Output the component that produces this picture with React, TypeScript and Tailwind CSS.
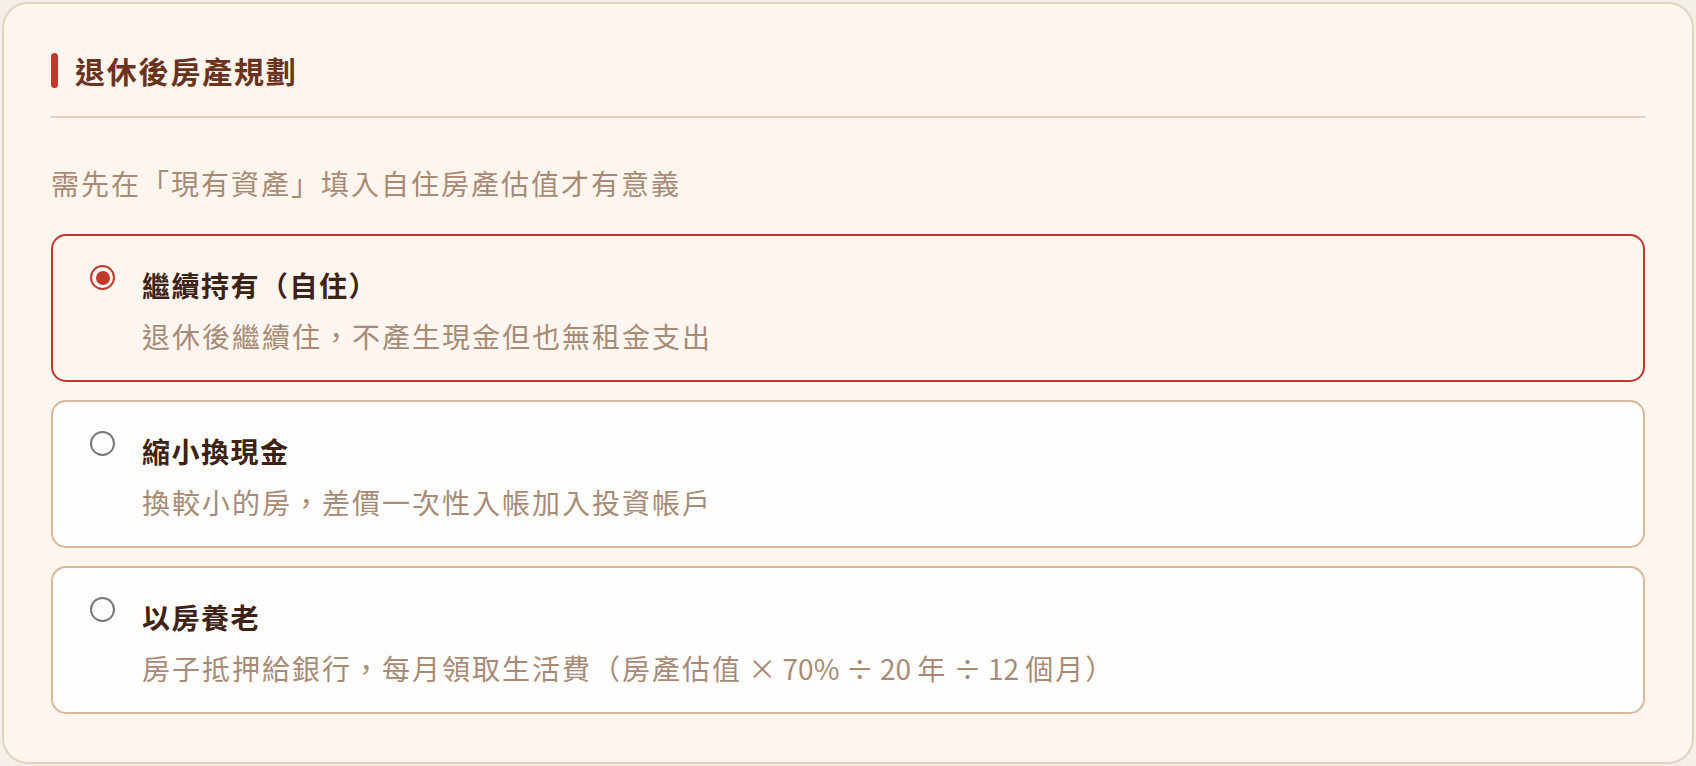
import React, { useState } from "react";

const FONT = '"Noto Sans CJK TC", "Noto Sans", "Liberation Sans", sans-serif';

type Seg = { t: string; latin?: boolean };

const options: { title: string; desc: Seg[] }[] = [
  { title: "繼續持有（自住）", desc: [{ t: "退休後繼續住，不產生現金但也無租金支出" }] },
  { title: "縮小換現金", desc: [{ t: "換較小的房，差價一次性入帳加入投資帳戶" }] },
  {
    title: "以房養老",
    desc: [
      { t: "房子抵押給銀行，每月領取生活費（房產估值" },
      { t: " × 70% ÷ 20 ", latin: true },
      { t: "年" },
      { t: " ÷ 12 ", latin: true },
      { t: "個月）" },
    ],
  },
];

export default function App() {
  const [selected, setSelected] = useState(0);
  return (
    <div className="min-h-[766px] w-full bg-[#f3efe7] p-[2px]" style={{ fontFamily: FONT }}>
      <div className="flex h-[762px] flex-col rounded-[26px] border-2 border-[#e2d2c0] bg-[#fdf5ee] px-[47px] pt-[47px]">
        <div className="flex h-[38px] items-center">
          <div className="h-[35px] w-[7px] rounded-full bg-[#c0392b]" />
          <h2 className="ml-[17px] text-[30px] font-bold leading-[38px] tracking-[1.8px] text-[#6b331d]">
            退休後房產規劃
          </h2>
        </div>
        <div className="mt-[27px] h-[2px] w-full bg-[#e3d0bd]" />
        <p className="mt-[45px] text-[28px] leading-[40px] tracking-[2px] text-[#a88b76]">
          需先在「現有資產」填入自住房產估值才有意義
        </p>
        <div className="mt-[31px] flex flex-col gap-[18px]">
          {options.map((o, i) => {
            const active = i === selected;
            return (
              <button
                key={i}
                onClick={() => setSelected(i)}
                className={
                  "flex items-start rounded-[15px] border-2 pb-[24px] pl-[37px] pt-[29px] text-left " +
                  (active ? "border-[#c0392b] bg-[#fdf5ef]" : "border-[#d8b99c] bg-[#fffefd]")
                }
              >
                <span
                  className={
                    "flex h-[25px] w-[25px] shrink-0 items-center justify-center rounded-full border-2 " +
                    (active ? "border-[#c0392b]" : "border-[#777777]")
                  }
                >
                  {active && <span className="h-[14px] w-[14px] rounded-full bg-[#c0392b]" />}
                </span>
                <span className="ml-[27px] flex flex-col gap-[11px]">
                  <span className="text-[28px] font-bold leading-[40px] tracking-[1.5px] text-[#3e2215]">
                    {o.title}
                  </span>
                  <span className="whitespace-pre text-[28px] leading-[40px] tracking-[2px] text-[#a88b76]">
                    {o.desc.map((s, j) =>
                      s.latin ? (
                        <span key={j} className="tracking-[0px]">
                          {s.t}
                        </span>
                      ) : (
                        <span key={j}>{s.t}</span>
                      )
                    )}
                  </span>
                </span>
              </button>
            );
          })}
        </div>
      </div>
    </div>
  );
}
